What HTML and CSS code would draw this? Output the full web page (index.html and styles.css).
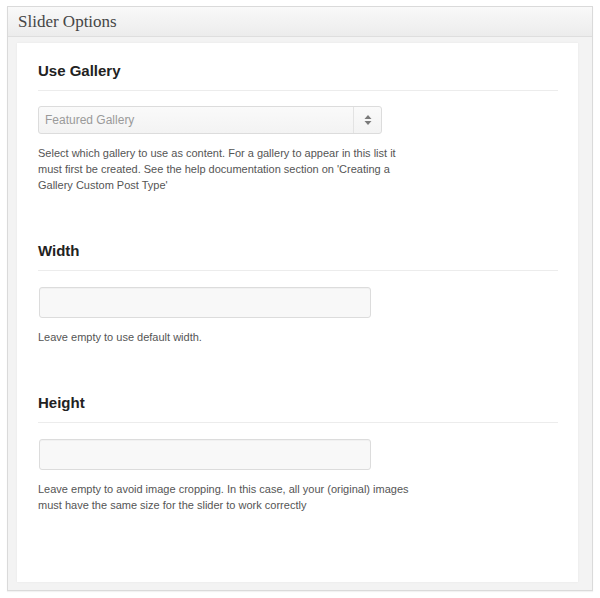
FILE: index.html
```html
<!DOCTYPE html>
<html>
<head>
<meta charset="utf-8">
<link rel="stylesheet" href="styles.css">
</head>
<body>
<div class="postbox">
  <div class="hndle"><span>Slider Options</span></div>
  <div class="inside">
    <div class="panel">
      <div class="field">
        <h3 class="field-title">Use Gallery</h3>
        <div class="select">
          <span class="select-value">Featured Gallery</span>
          <span class="select-arrow">
            <svg width="8" height="10" viewBox="0 0 8 10"><path d="M4 0 L7.5 4 L0.5 4 Z M4 10 L7.5 6 L0.5 6 Z" fill="#7a7a7a"/></svg>
          </span>
        </div>
        <p class="desc">Select which gallery to use as content. For a gallery to appear in this list it must first be created. See the help documentation section on 'Creating a Gallery Custom Post Type'</p>
      </div>
      <div class="field">
        <h3 class="field-title">Width</h3>
        <div class="input"></div>
        <p class="desc">Leave empty to use default width.</p>
      </div>
      <div class="field">
        <h3 class="field-title">Height</h3>
        <div class="input"></div>
        <p class="desc">Leave empty to avoid image cropping. In this case, all your (original) images must have the same size for the slider to work correctly</p>
      </div>
    </div>
  </div>
</div>
</body>
</html>
```
FILE: styles.css
```css
html, body {
  margin: 0;
  padding: 0;
  background: #ffffff;
}
body {
  padding: 6px 7px 7px 7px;
  font-family: "Liberation Sans", Arial, sans-serif;
}
.postbox {
  width: 584px;
  height: 583px;
  border: 1px solid #dadada;
  box-shadow: 0 1px 1px rgba(0,0,0,0.05);
  background: #f3f3f3;
  display: flex;
  flex-direction: column;
}
.hndle {
  height: 29px;
  border-bottom: 1px solid #dedede;
  background: linear-gradient(to bottom, #f9f9f9, #ececec);
  display: flex;
  align-items: center;
  padding-left: 10px;
  font-family: "Liberation Serif", Georgia, serif;
  font-size: 17px;
  color: #464646;
}
.inside {
  flex: 1;
  padding: 6px 14px 8px 9px;
  display: flex;
}
.panel {
  flex: 1;
  background: #ffffff;
  padding: 18px 20px 0 21px;
  box-shadow: 0 0 2px rgba(0,0,0,0.06);
}
.field {
  margin-bottom: 48px;
}
.field-title {
  margin: 0;
  font-size: 15px;
  line-height: 20px;
  font-weight: bold;
  color: #222;
  padding-bottom: 9px;
  border-bottom: 1px solid #ececec;
}
.select {
  margin-top: 15px;
  width: 342px;
  height: 26px;
  border: 1px solid #dcdcdc;
  border-radius: 3px;
  background: linear-gradient(to bottom, #fafafa, #f3f3f3);
  display: flex;
  align-items: center;
}
.select-value {
  flex: 1;
  padding-left: 6px;
  font-size: 12px;
  color: #9a9a9a;
}
.select-arrow {
  width: 27px;
  height: 26px;
  border-left: 1px solid #e3e3e3;
  display: flex;
  align-items: center;
  justify-content: center;
}
.input {
  margin-top: 16px;
  margin-left: 1px;
  width: 330px;
  height: 29px;
  border: 1px solid #dcdcdc;
  border-radius: 3px;
  background: #f8f8f8;
  box-shadow: inset 0 1px 1px rgba(0,0,0,0.03);
}
.desc {
  margin: 11px 0 0 0;
  max-width: 372px;
  font-size: 11px;
  line-height: 16px;
  color: #555;
}
```
